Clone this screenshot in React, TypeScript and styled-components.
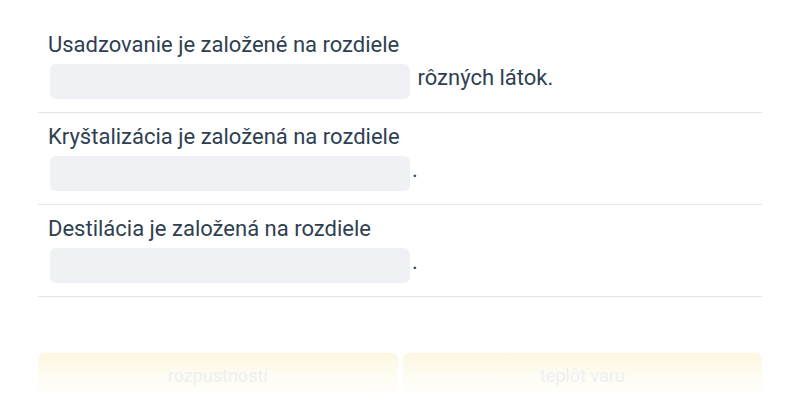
import React from "react";
import styled, { createGlobalStyle } from "styled-components";

interface IItem {
  prompt: string;
  after: string;
}

const items: IItem[] = [
  { prompt: "Usadzovanie je založené na rozdiele", after: "\u00a0rôzných látok." },
  { prompt: "Kryštalizácia je založená na rozdiele", after: "." },
  { prompt: "Destilácia je založená na rozdiele", after: "." },
];

const options = ["rozpustností", "teplôt varu"];

const App = () => {
  return (
    <>
      <GlobalStyle />
      <Page>
        <List>
          {items.map((item) => (
            <Row key={item.prompt}>
              <Prompt>{item.prompt}</Prompt>
              <AnswerLine>
                <Blank />
                <After>{item.after}</After>
              </AnswerLine>
            </Row>
          ))}
        </List>
        <Choices>
          {options.map((opt) => (
            <Choice key={opt}>{opt}</Choice>
          ))}
        </Choices>
      </Page>
    </>
  );
};

export default App;

const GlobalStyle = createGlobalStyle`
  body {
    margin: 0;
    background: #ffffff;
    font-family: Roboto, "Noto Sans", sans-serif;
  }
`;

const Page = styled.div`
  width: 800px;
  height: 400px;
  overflow: hidden;
  padding: 21px 38px 0;
  box-sizing: border-box;
`;

const List = styled.div`
  display: flex;
  flex-direction: column;
`;

const Row = styled.div`
  padding: 10px 10px 13px;
  border-bottom: 1px solid #e3e5e9;
  color: #2f3f52;
  font-size: 22px;
`;

const Prompt = styled.div`
  height: 28px;
  line-height: 28px;
`;

const AnswerLine = styled.div`
  display: flex;
  align-items: flex-start;
  margin-top: 5px;
  height: 35px;
`;

const Blank = styled.div`
  width: 360px;
  height: 35px;
  margin: 0 2px;
  border-radius: 6px;
  background: #f0f1f4;
`;

const After = styled.span`
  white-space: pre;
  line-height: 28px;
`;

const Choices = styled.div`
  display: grid;
  grid-template-columns: 1fr 1fr;
  gap: 5px;
  margin-top: 56px;
`;

const Choice = styled.div`
  height: 44px;
  display: flex;
  align-items: center;
  justify-content: center;
  border-radius: 6px;
  font-size: 18px;
  color: #eef0f3;
  background: linear-gradient(to bottom, #fdf7e0 0%, #fefbf0 45%, #ffffff 100%);
`;
